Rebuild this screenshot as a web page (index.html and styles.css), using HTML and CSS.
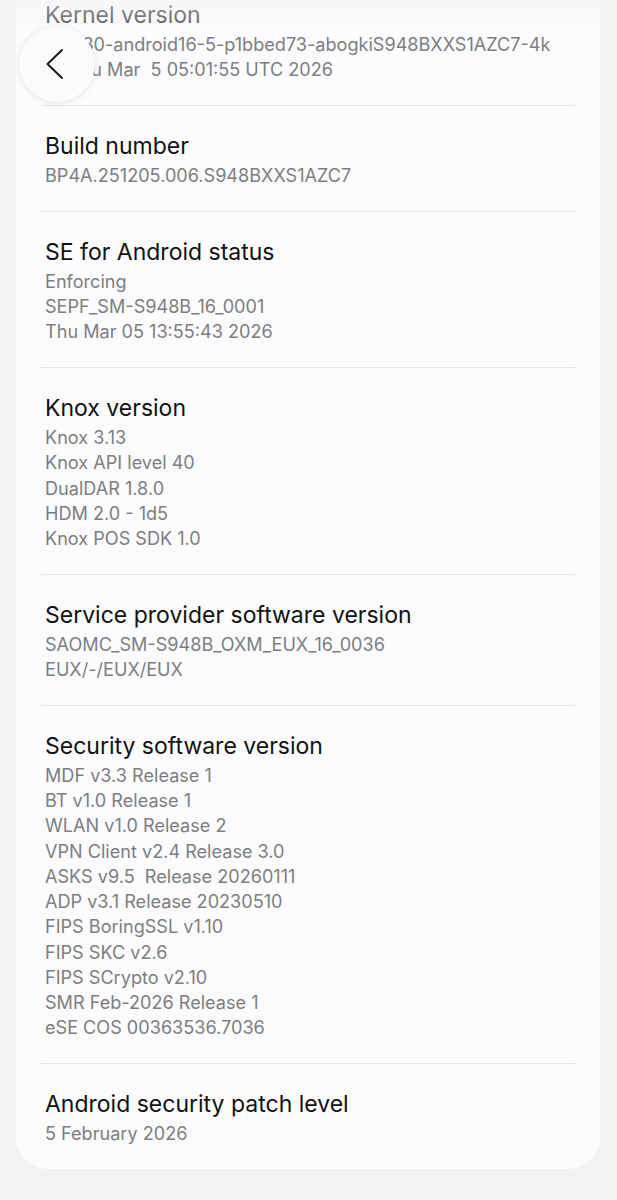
FILE: index.html
```html
<!DOCTYPE html>
<html>
<head>
<meta charset="utf-8">
<link rel="stylesheet" href="styles.css">
</head>
<body>
<div class="page">
  <div class="card">
    <div class="item first">
      <div class="title">Kernel version</div>
      <div class="sub">6.12.30-android16-5-p1bbed73-abogkiS948BXXS1AZC7-4k</div>
      <div class="sub">#1 Thu Mar&nbsp; 5 05:01:55 UTC 2026</div>
    </div>
    <div class="item">
      <div class="title">Build number</div>
      <div class="sub">BP4A.251205.006.S948BXXS1AZC7</div>
    </div>
    <div class="item">
      <div class="title">SE for Android status</div>
      <div class="sub">Enforcing</div>
      <div class="sub">SEPF_SM-S948B_16_0001</div>
      <div class="sub">Thu Mar 05 13:55:43 2026</div>
    </div>
    <div class="item">
      <div class="title">Knox version</div>
      <div class="sub">Knox 3.13</div>
      <div class="sub">Knox API level 40</div>
      <div class="sub">DualDAR 1.8.0</div>
      <div class="sub">HDM 2.0 - 1d5</div>
      <div class="sub">Knox POS SDK 1.0</div>
    </div>
    <div class="item">
      <div class="title">Service provider software version</div>
      <div class="sub">SAOMC_SM-S948B_OXM_EUX_16_0036</div>
      <div class="sub">EUX/-/EUX/EUX</div>
    </div>
    <div class="item">
      <div class="title">Security software version</div>
      <div class="sub">MDF v3.3 Release 1</div>
      <div class="sub">BT v1.0 Release 1</div>
      <div class="sub">WLAN v1.0 Release 2</div>
      <div class="sub">VPN Client v2.4 Release 3.0</div>
      <div class="sub">ASKS v9.5&nbsp; Release 20260111</div>
      <div class="sub">ADP v3.1 Release 20230510</div>
      <div class="sub">FIPS BoringSSL v1.10</div>
      <div class="sub">FIPS SKC v2.6</div>
      <div class="sub">FIPS SCrypto v2.10</div>
      <div class="sub">SMR Feb-2026 Release 1</div>
      <div class="sub">eSE COS 00363536.7036</div>
    </div>
    <div class="item">
      <div class="title">Android security patch level</div>
      <div class="sub">5 February 2026</div>
    </div>
  </div>
  <div class="topfade"></div>
  <button class="back" aria-label="Back">
    <svg width="20" height="32" viewBox="0 0 20 32"><path d="M16 2 L1.5 16 L16 30" fill="none" stroke="#111" stroke-width="1.8" stroke-linecap="round" stroke-linejoin="round"/></svg>
  </button>
</div>
</body>
</html>
```

FILE: styles.css
```css
html, body {
  margin: 0;
  padding: 0;
  background: #f2f2f4;
  font-family: Inter, Roboto, "Noto Sans", sans-serif;
}
.page {
  position: relative;
  width: 617px;
  height: 1200px;
  overflow: hidden;
}
.card {
  margin: -26px 17px 0 16px;
  background: #fcfcfe;
  border-radius: 0 0 32px 32px;
}
.item {
  margin: 0 25px;
  padding: 25px 4px 22.5px;
  border-top: 1px solid #e6e6e8;
}
.item.first {
  border-top: none;
  padding-top: 26px;
}
.title {
  font-size: 23px;
  line-height: 30px;
  color: #111;
  margin-bottom: 2px;
}
.first .title { color: #555; }
.sub {
  font-size: 18.1px;
  line-height: 25.25px;
  color: #7e7e80;
  white-space: nowrap;
}
.topfade {
  position: absolute;
  left: 0;
  top: 0;
  right: 0;
  height: 30px;
  background: linear-gradient(rgba(242,242,244,0.5), rgba(242,242,244,0));
  pointer-events: none;
}
.back {
  position: absolute;
  left: 19px;
  top: 26px;
  width: 76px;
  height: 76px;
  border: none;
  border-radius: 50%;
  background: #fbfbfb;
  box-shadow: 0 1px 6px rgba(0,0,0,0.10);
  display: flex;
  align-items: center;
  justify-content: center;
  padding: 0 3px 0 0;
}
```
